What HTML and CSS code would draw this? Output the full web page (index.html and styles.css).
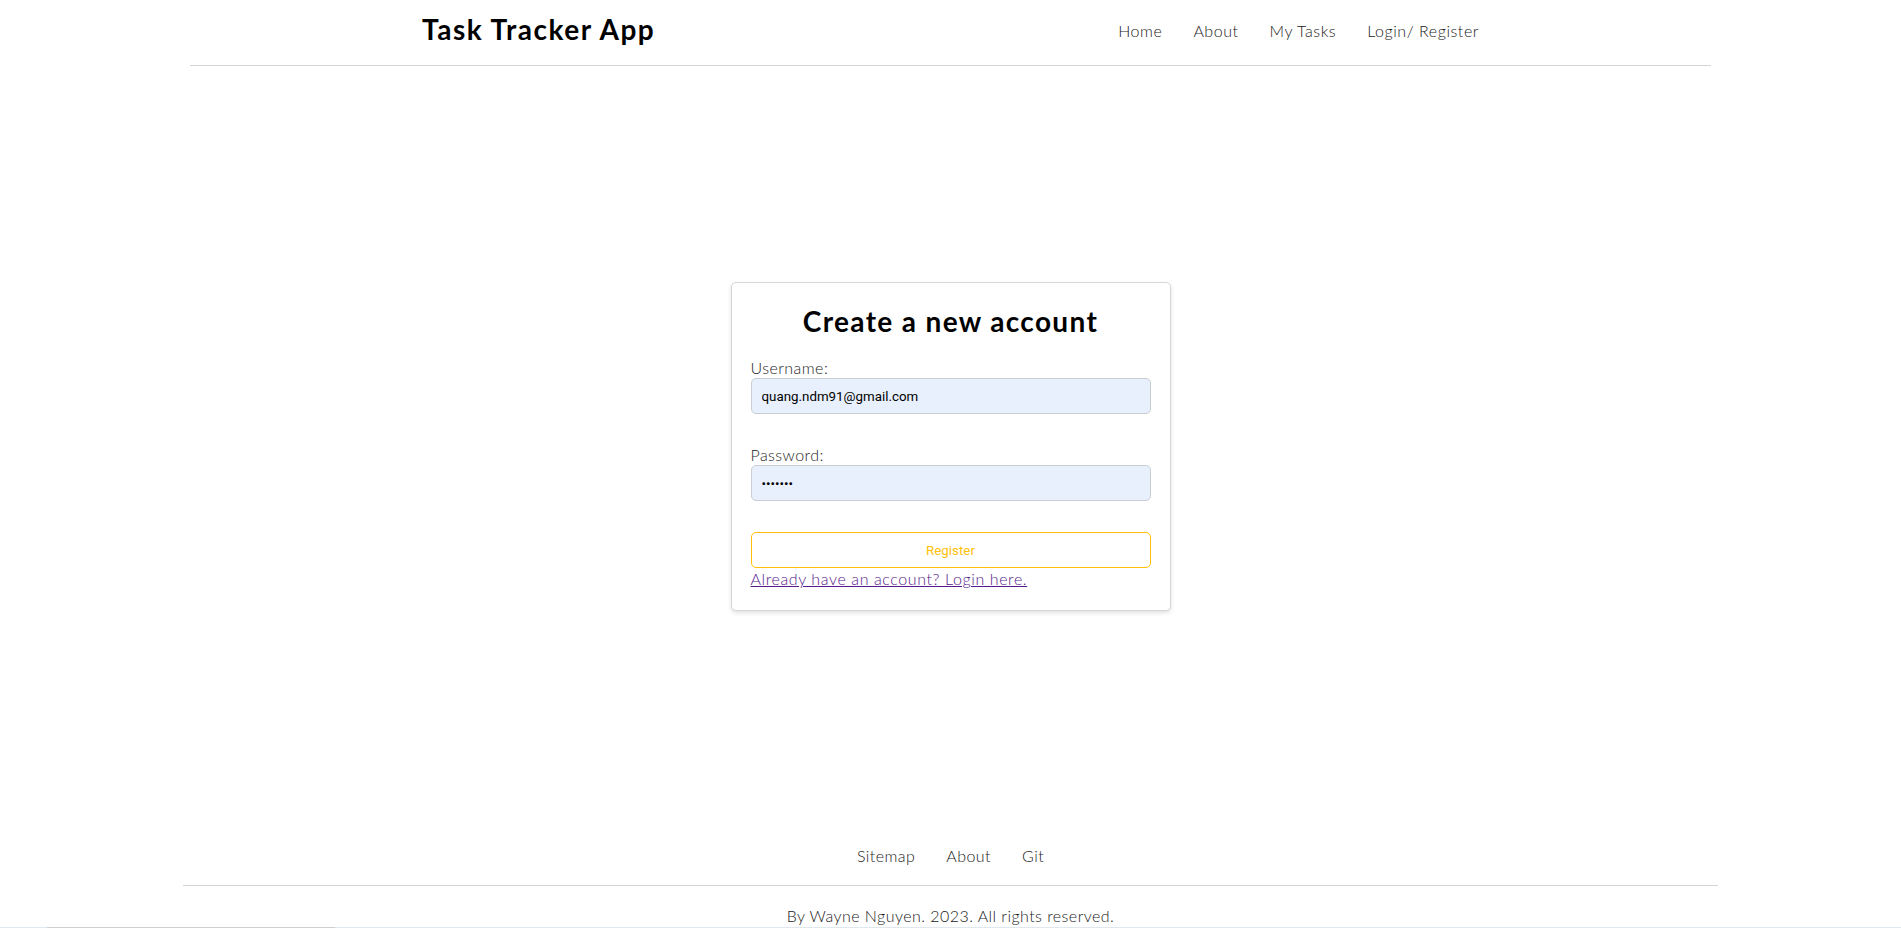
FILE: index.html
```html
<!DOCTYPE html>
<html lang="en">
<head>
<meta charset="utf-8">
<title>Task Tracker App</title>
<link rel="stylesheet" href="styles.css">
</head>
<body>
  <header class="site-header">
    <div class="header-inner">
      <a class="brand" href="#">Task Tracker App</a>
      <nav class="main-nav">
        <a href="#">Home</a>
        <a href="#">About</a>
        <a href="#">My Tasks</a>
        <a href="#">Login/ Register</a>
      </nav>
    </div>
  </header>

  <main class="page">
    <form class="card">
      <h2 class="card-title">Create a new account</h2>
      <div class="field">
        <label class="field-label" for="username">Username:</label>
        <input class="field-input" id="username" type="text" value="quang.ndm91@gmail.com">
      </div>
      <div class="field">
        <label class="field-label" for="password">Password:</label>
        <input class="field-input" id="password" type="password" value="1234567">
      </div>
      <button class="btn-register" type="button">Register</button>
      <a class="login-link" href="#">Already have an account? Login here.</a>
    </form>
  </main>

  <footer class="site-footer">
    <nav class="footer-nav">
      <a href="#">Sitemap</a>
      <a href="#">About</a>
      <a href="#">Git</a>
    </nav>
    <p class="copyright">By Wayne Nguyen. 2023. All rights reserved.</p>
  </footer>

  <div class="bottom-edge"><span class="bottom-edge-thumb"></span></div>
</body>
</html>
```

FILE: styles.css
```css
* {
  box-sizing: border-box;
}

html, body {
  margin: 0;
  padding: 0;
  background: #ffffff;
}

body {
  font-family: "Lato", "Noto Sans", "Liberation Sans", sans-serif;
  font-weight: 300;
  letter-spacing: 0.45px;
  color: #1e1e1e;
  font-size: 16px;
  overflow: hidden;
}

a {
  text-decoration: none;
  color: inherit;
}

/* Header */
.site-header {
  width: 80%;
  margin: 0 auto;
  border-bottom: 1px solid #d4d4d4;
}

.header-inner {
  max-width: 1057px;
  margin: 0 auto;
  display: flex;
  justify-content: space-between;
  align-items: flex-start;
  padding: 12px 0 19px;
}

.brand {
  font-size: 28px;
  line-height: 34px;
  font-weight: 700;
  letter-spacing: 1.5px;
  color: #000000;
}

.main-nav {
  display: flex;
  gap: 31px;
  padding-top: 9px;
}

.main-nav a {
  font-size: 16px;
  line-height: 19px;
  letter-spacing: 0.55px;
  color: #1a1a1a;
}

/* Main */
.page {
  padding: 216px 0 235px;
}

.card {
  width: 440px;
  margin: 0 auto;
  padding: 21px 19px 22px;
  border: 1px solid #d6d6d6;
  border-radius: 5px;
  box-shadow: 0 2px 4px rgba(0, 0, 0, 0.12);
  background: #ffffff;
}

.card-title {
  margin: 0 0 20px;
  text-align: center;
  font-size: 28px;
  line-height: 34px;
  font-weight: 700;
  letter-spacing: 1.35px;
  color: #000000;
}

.field {
  display: flex;
  flex-direction: column;
  margin-bottom: 31px;
}

.field + .field {
  margin-top: 3px;
}

.field-label {
  display: block;
  font-size: 16px;
  line-height: 19px;
  color: #1e1e1e;
  margin-bottom: 1px;
}

.field-input {
  width: 100%;
  height: 36px;
  padding: 0 10px;
  border: 1px solid #c9ced4;
  border-radius: 5px;
  background: #e8f0fe;
  font-family: "Roboto", "Liberation Sans", sans-serif;
  font-weight: 400;
  letter-spacing: 0;
  font-size: 13.33px;
  color: #000000;
  outline: none;
}

.btn-register {
  display: block;
  width: 100%;
  height: 36px;
  border: 1px solid #ffc107;
  border-radius: 5px;
  background: #ffffff;
  color: #ffc107;
  font-family: "Roboto", "Liberation Sans", sans-serif;
  font-weight: 400;
  letter-spacing: 0;
  font-size: 13.33px;
  cursor: pointer;
}

.login-link {
  display: block;
  margin-top: 1px;
  font-size: 16px;
  line-height: 19px;
  letter-spacing: 0.6px;
  color: #551a8b;
  text-decoration: underline;
}

/* Footer */
.site-footer {
  text-align: center;
}

.footer-nav {
  display: flex;
  justify-content: center;
  gap: 31px;
  padding-bottom: 20px;
  margin: 0 183px;
  border-bottom: 1px solid #d4d4d4;
}

.footer-nav a {
  font-size: 16px;
  line-height: 19px;
  color: #1a1a1a;
}

.copyright {
  margin: 20px 0 0;
  font-size: 16px;
  line-height: 19px;
  color: #1a1a1a;
}

.bottom-edge {
  position: fixed;
  left: 0;
  right: 0;
  bottom: 0;
  height: 1px;
  background: #dfe8ee;
}

.bottom-edge-thumb {
  position: absolute;
  left: 47px;
  width: 288px;
  height: 1px;
  background: #cfcfcf;
}
```
